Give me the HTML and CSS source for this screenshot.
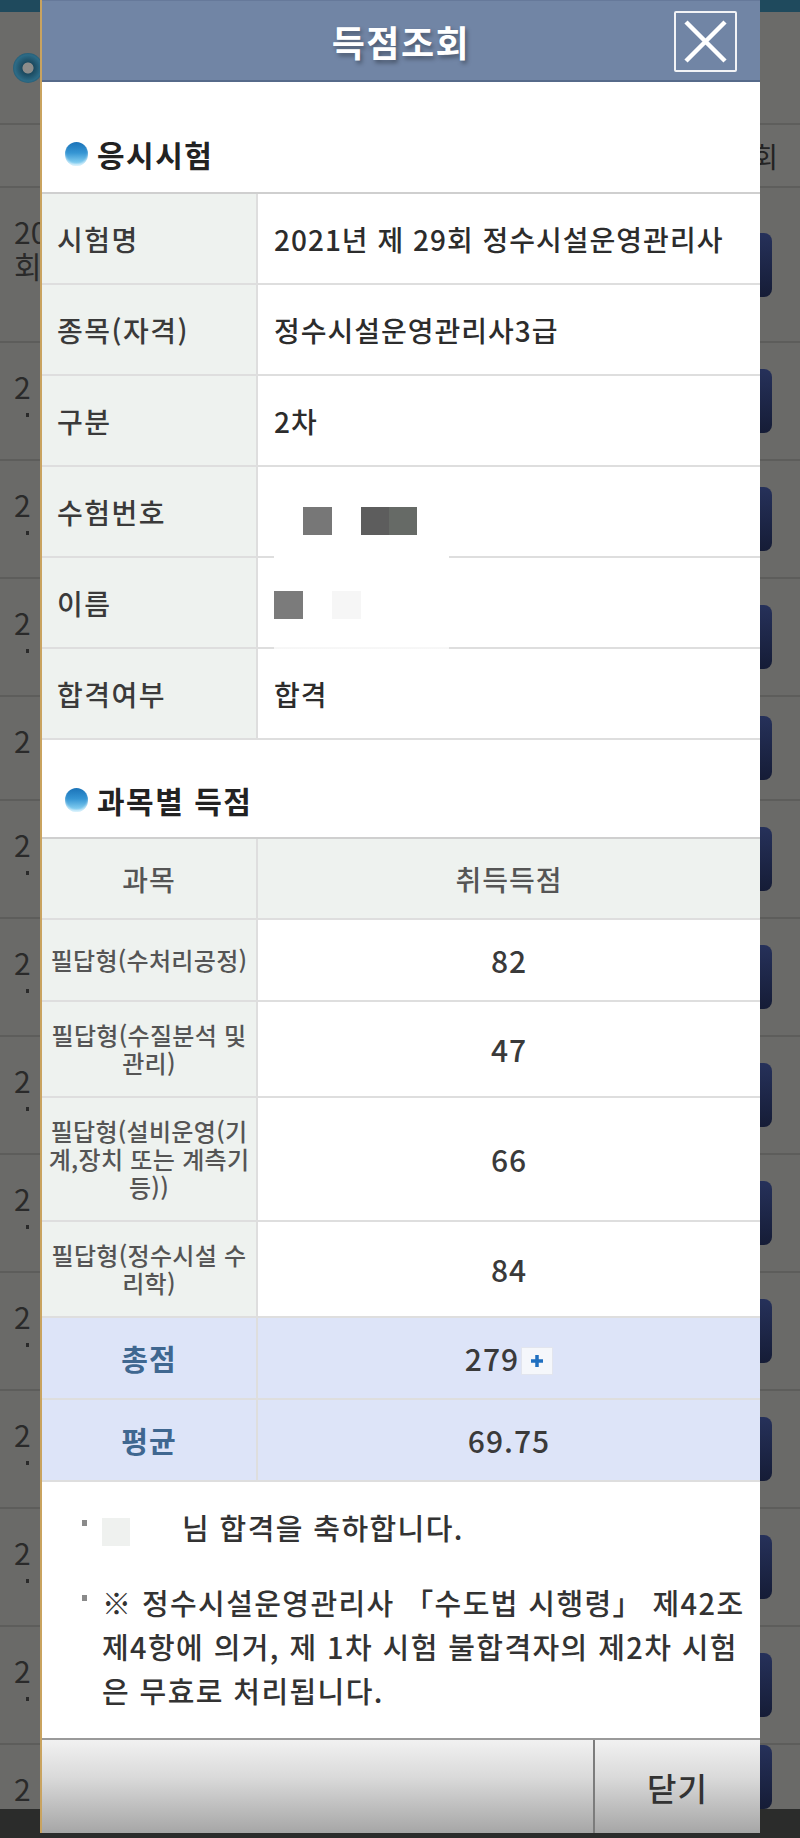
FILE: index.html
```html
<!DOCTYPE html>
<html lang="ko">
<head>
<meta charset="utf-8">
<title>득점조회</title>
<link rel="stylesheet" href="styles.css">
</head>
<body>
<div class="page">
  <div class="bg-top"></div>
  <div class="bg-head"><span class="bg-icon"></span></div>
  <div class="bg-thead"><span>회</span></div>
  <div class="bg-row bg-row-first"><div class="bg-txt">20<br>회</div><span class="bg-btn"></span></div>
  <div class="bg-row"><div class="bg-txt bg-mark">2</div><span class="bg-btn"></span></div>
  <div class="bg-row"><div class="bg-txt bg-mark">2</div><span class="bg-btn"></span></div>
  <div class="bg-row"><div class="bg-txt bg-mark">2</div><span class="bg-btn"></span></div>
  <div class="bg-row bg-row-short"><div class="bg-txt">2</div><span class="bg-btn"></span></div>
  <div class="bg-row"><div class="bg-txt bg-mark">2</div><span class="bg-btn"></span></div>
  <div class="bg-row"><div class="bg-txt bg-mark">2</div><span class="bg-btn"></span></div>
  <div class="bg-row"><div class="bg-txt bg-mark">2</div><span class="bg-btn"></span></div>
  <div class="bg-row"><div class="bg-txt bg-mark">2</div><span class="bg-btn"></span></div>
  <div class="bg-row"><div class="bg-txt bg-mark">2</div><span class="bg-btn"></span></div>
  <div class="bg-row"><div class="bg-txt bg-mark">2</div><span class="bg-btn"></span></div>
  <div class="bg-row"><div class="bg-txt bg-mark">2</div><span class="bg-btn"></span></div>
  <div class="bg-row"><div class="bg-txt bg-mark">2</div><span class="bg-btn"></span></div>
  <div class="bg-fill"><div class="bg-txt">2</div><span class="bg-btn"></span></div>
  <div class="bg-bottom"></div>
</div>

<div class="dialog">
  <header class="dlg-head">
    <h1>득점조회</h1>
    <button class="close" type="button" aria-label="닫기">
      <svg viewBox="0 0 59 57" width="59" height="57"><path d="M10 9 L49 48 M49 9 L10 48" stroke="#fff" stroke-width="4.5" fill="none"/></svg>
    </button>
  </header>

  <main class="dlg-body">
    <h2 class="sec-title"><span class="dot"></span>응시시험</h2>
    <div class="info">
      <div class="info-row"><div class="lbl">시험명</div><div class="val">2021년 제 29회 정수시설운영관리사</div></div>
      <div class="info-row"><div class="lbl">종목(자격)</div><div class="val">정수시설운영관리사3급</div></div>
      <div class="info-row"><div class="lbl">구분</div><div class="val">2차</div></div>
      <div class="info-row"><div class="lbl">수험번호</div><div class="val val-mask"><span class="mask m1"></span><span class="mask m2"></span></div></div>
      <div class="info-row"><div class="lbl">이름</div><div class="val val-name"><span class="blur"></span><span class="mask m3"></span><span class="mask m4"></span></div></div>
      <div class="info-row"><div class="lbl">합격여부</div><div class="val">합격</div></div>
    </div>

    <h2 class="sec-title sec-two"><span class="dot"></span>과목별 득점</h2>
    <div class="scores">
      <div class="srow shead"><div class="sc">과목</div><div class="sv">취득득점</div></div>
      <div class="srow"><div class="sc">필답형(수처리공정)</div><div class="sv">82</div></div>
      <div class="srow"><div class="sc">필답형(수질분석 및<br>관리)</div><div class="sv">47</div></div>
      <div class="srow"><div class="sc">필답형(설비운영(기<br>계,장치 또는 계측기<br>등))</div><div class="sv">66</div></div>
      <div class="srow"><div class="sc">필답형(정수시설 수<br>리학)</div><div class="sv">84</div></div>
      <div class="srow stotal"><div class="sc">총점</div><div class="sv"><span>279</span><span class="plus"><svg viewBox="0 0 14 14" width="14" height="14"><path d="M7 1 V13 M1 7 H13" stroke="#1f6fc0" stroke-width="3.5" fill="none"/></svg></span></div></div>
      <div class="srow stotal"><div class="sc">평균</div><div class="sv">69.75</div></div>
    </div>

    <ul class="notes">
      <li><span class="name-mask"></span>님 합격을 축하합니다.</li>
      <li>※ 정수시설운영관리사 「수도법 시행령」 제42조<br>제4항에 의거, 제 1차 시험 불합격자의 제2차 시험<br>은 무효로 처리됩니다.</li>
    </ul>
  </main>

  <footer class="dlg-foot">
    <div class="foot-left"></div>
    <button class="foot-btn" type="button">닫기</button>
  </footer>
</div>
</body>
</html>
```

FILE: styles.css
```css
html, body {
  margin: 0;
  padding: 0;
}
body {
  width: 800px;
  height: 1838px;
  overflow: hidden;
  position: relative;
  background: #6a6a68;
  font-family: "Noto Sans CJK KR", "Noto Sans", sans-serif;
}

/* ---------- dimmed background page ---------- */
.page {
  display: flex;
  flex-direction: column;
  height: 1838px;
}
.bg-top {
  flex: none;
  height: 12px;
  background: #1f4a5d;
}
.bg-head {
  flex: none;
  height: 113px;
  box-sizing: border-box;
  display: flex;
  align-items: center;
  padding-left: 13px;
  border-bottom: 2px solid #5e5e5c;
  background: #6b6b69;
}
.bg-icon {
  width: 30px;
  height: 30px;
  border-radius: 50%;
  background: radial-gradient(circle, #8c8c8a 0 24%, #1b4a60 28%, #2d6b86 62%, #143647 100%);
}
.bg-thead {
  flex: none;
  height: 63px;
  box-sizing: border-box;
  display: flex;
  align-items: center;
  justify-content: flex-end;
  padding-right: 22px;
  border-bottom: 2px solid #5e5e5c;
  background: #6c6c6a;
  font-size: 28px;
  color: #232323;
}
.bg-row, .bg-fill {
  flex: none;
  height: 118px;
  box-sizing: border-box;
  display: flex;
  align-items: center;
  justify-content: space-between;
  padding: 0 28px 0 14px;
  border-bottom: 2px solid #5d5d5b;
}
.bg-row-first { height: 155px; }
.bg-row-short { height: 104px; }
.bg-fill {
  flex: 1;
  height: auto;
  border-bottom: none;
}
.bg-txt {
  align-self: flex-start;
  margin-top: 26px;
  font-size: 30px;
  line-height: 34px;
  color: #2a2a2a;
}
.bg-mark::after {
  content: "";
  display: block;
  width: 3px;
  height: 4px;
  margin: 10px 0 0 12px;
  background: #2a2a2a;
}
.bg-btn {
  width: 40px;
  height: 64px;
  border-radius: 8px;
  background: linear-gradient(#26315a, #151c36);
}
.bg-bottom {
  flex: none;
  height: 38px;
  background: #2b2c2b;
}

/* ---------- dialog ---------- */
.dialog {
  position: absolute;
  top: 0;
  left: 40px;
  width: 720px;
  height: 1833px;
  box-sizing: border-box;
  border-left: 2px solid #c9a35f;
  background: #fff;
  display: flex;
  flex-direction: column;
}
.dlg-head {
  flex: none;
  height: 82px;
  box-sizing: border-box;
  position: relative;
  display: flex;
  align-items: center;
  justify-content: center;
  background: #7185a5;
  border-top: 1px solid #66799a;
  border-bottom: 2px solid #566a8a;
}
.dlg-head h1 {
  margin: 0;
  font-size: 36px;
  font-weight: 700;
  line-height: 44px;
  color: #fff;
  letter-spacing: 1.5px;
  text-shadow: 2px 3px 4px rgba(0, 0, 0, 0.35);
}
.close {
  position: absolute;
  right: 23px;
  top: 10px;
  width: 63px;
  height: 61px;
  box-sizing: border-box;
  padding: 0;
  border: 2px solid #f2f3f6;
  border-radius: 2px;
  background: transparent;
  display: flex;
  align-items: center;
  justify-content: center;
}
.close svg { display: block; }

.dlg-body {
  flex: 1;
  display: flex;
  flex-direction: column;
}
.sec-title {
  display: flex;
  align-items: center;
  gap: 9px;
  margin: 52px 0 18px 23px;
  font-size: 30px;
  font-weight: 700;
  line-height: 40px;
  letter-spacing: 1.5px;
  color: #222;
}
.sec-two { margin-top: 40px; margin-bottom: 17px; }
.dot {
  width: 23px;
  height: 24px;
  border-radius: 50%;
  background: linear-gradient(180deg, #1b73b8 0%, #3595d3 45%, #7fcbef 85%, #b8e6fa 100%);
  box-shadow: inset 0 -2px 2px rgba(255, 255, 255, 0.5);
}

/* info table */
.info { border-top: 2px solid #cfcfcf; }
.info-row {
  display: grid;
  grid-template-columns: 216px 1fr;
  height: 91px;
  box-sizing: border-box;
  border-bottom: 2px solid #dedede;
}
.lbl {
  display: flex;
  align-items: center;
  padding-left: 15px;
  background: #eef2ef;
  border-right: 2px solid #dedede;
  font-size: 28px;
  font-weight: 500;
  letter-spacing: 1.5px;
  color: #3a3a3a;
}
.val {
  position: relative;
  display: flex;
  align-items: center;
  padding-left: 16px;
  font-size: 28px;
  font-weight: 500;
  letter-spacing: 1px;
  color: #2c2c2c;
}
.mask {
  position: relative;
  z-index: 1;
  display: block;
  height: 28px;
}
.m1 { width: 29px; margin: 18px 0 0 29px; background: #777; }
.m2 { width: 56px; margin: 18px 0 0 29px; background: linear-gradient(90deg, #5d5d5d 50%, #666a66 50%); }
.m3 { width: 29px; margin-top: 5px; background: #7b7b7b; }
.m4 { width: 29px; margin: 5px 0 0 29px; background: #f6f6f6; }
.blur {
  position: absolute;
  left: 16px;
  width: 175px;
  top: -3px;
  bottom: -2px;
  background: linear-gradient(#fff 96%, rgba(255, 255, 255, 0.75) 96%);
}

/* score table */
.scores { border-top: 2px solid #cfcfcf; }
.srow {
  display: grid;
  grid-template-columns: 216px 1fr;
  min-height: 82px;
  box-sizing: border-box;
  border-bottom: 2px solid #dedede;
}
.sc {
  display: flex;
  align-items: center;
  justify-content: center;
  text-align: center;
  padding: 19px 0;
  background: #eef2ef;
  border-right: 2px solid #dedede;
  font-size: 24px;
  font-weight: 500;
  line-height: 28px;
  letter-spacing: 0.3px;
  color: #555;
  white-space: nowrap;
}
.sv {
  display: flex;
  align-items: center;
  justify-content: center;
  font-size: 30px;
  font-weight: 500;
  letter-spacing: 1px;
  color: #3a3a3a;
}
.shead { min-height: 81px; }
.shead .sc, .shead .sv {
  background: #eef2ef;
  font-size: 28px;
  letter-spacing: 1px;
  color: #555;
}
.stotal .sc, .stotal .sv { background: #dde4f8; }
.stotal .sc {
  font-size: 29px;
  font-weight: 700;
  letter-spacing: 1px;
  color: #3f6790;
}
.plus {
  display: flex;
  align-items: center;
  justify-content: center;
  width: 32px;
  height: 28px;
  box-sizing: border-box;
  margin: 6px 0 0 2px;
  background: #f5f7fb;
  border: 1px solid #e2e5ee;
}
.plus svg { display: block; }

/* notes */
.notes {
  list-style: none;
  margin: 0;
  padding: 23px 0 0 40px;
  font-size: 29px;
  font-weight: 500;
  line-height: 44px;
  letter-spacing: 1.4px;
  color: #333;
}
.notes li {
  position: relative;
  padding-left: 20px;
  white-space: nowrap;
}
.notes li + li { margin-top: 31px; }
.notes li::before {
  content: "";
  position: absolute;
  left: 0;
  top: 15px;
  width: 5px;
  height: 6px;
  background: #8a8a8a;
}
.name-mask {
  display: inline-block;
  width: 28px;
  height: 28px;
  margin-right: 52px;
  vertical-align: middle;
  background: #eff1ef;
}

/* footer */
.dlg-foot {
  flex: none;
  height: 95px;
  box-sizing: border-box;
  display: flex;
  border-top: 2px solid #9a9a9a;
  background: linear-gradient(#f1f1f1 0%, #dadada 40%, #a6a6a6 100%);
}
.foot-left {
  flex: 1;
  border-right: 2px solid #7c7c7c;
}
.foot-btn {
  width: 165px;
  padding: 0;
  border: none;
  background: transparent;
  font-family: inherit;
  font-size: 32px;
  font-weight: 500;
  letter-spacing: 1px;
  color: #333;
}
```
